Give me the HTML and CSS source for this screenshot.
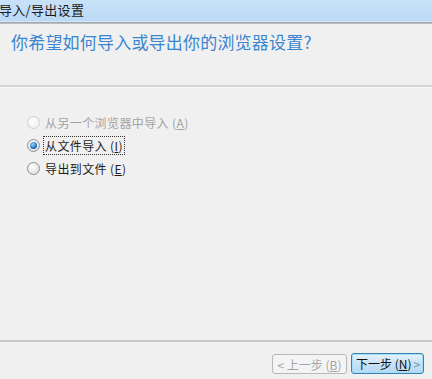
FILE: index.html
```html
<!DOCTYPE html>
<html lang="zh-CN">
<head>
<meta charset="utf-8">
<title>导入/导出设置</title>
<link rel="stylesheet" href="styles.css">
</head>
<body>
<div class="window">
  <div class="titlebar"><span class="title">导入/导出设置</span></div>
  <div class="header">
    <div class="question">你希望如何导入或导出你的浏览器设置?</div>
  </div>
  <div class="options">
    <div class="option disabled">
      <span class="radio"></span>
      <span class="label">从另一个浏览器中导入 (<u>A</u>)</span>
    </div>
    <div class="option">
      <span class="radio checked"></span>
      <span class="label focus">从文件导入 (<u>I</u>)</span>
    </div>
    <div class="option">
      <span class="radio"></span>
      <span class="label">导出到文件 (<u>E</u>)</span>
    </div>
  </div>
  <div class="spacer"></div>
  <div class="footer">
    <div class="btn btn-disabled">&lt; 上一步 (<u>B</u>)</div>
    <div class="btn btn-default"><span class="btn-text">下一步 (<u>N</u>)</span><span class="arrow">&gt;</span></div>
  </div>
</div>
</body>
</html>
```
FILE: styles.css
```css
html, body {
  margin: 0;
  padding: 0;
}
body {
  background: #f0f0f0;
  font-family: "Noto Sans CJK SC", "Noto Sans", sans-serif;
  color: #1e1e1e;
}
.window {
  width: 432px;
  height: 379px;
  display: flex;
  flex-direction: column;
  overflow: hidden;
}
.titlebar {
  height: 21px;
  background: linear-gradient(#c8e1f9, #bcd9f5);
  border-bottom: 1px solid #d4e7f8;
  box-shadow: 0 1px 0 #9ea9b3, 0 2px 0 #bdbdbd;
  margin-bottom: 2px;
  display: flex;
  align-items: center;
}
.title {
  font-size: 13px;
  line-height: 15px;
  color: #1a1a1a;
  margin-left: -1px;
  margin-top: -3px;
  letter-spacing: 0.3px;
}
.header {
  padding-left: 11px;
  border-bottom: 2px solid #d4d4d4;
  box-shadow: 0 1px 0 #fbfbfb;
  box-sizing: border-box;
  height: 63px;
}
.question {
  margin-top: 7px;
  font-size: 17px;
  line-height: 22px;
  color: #3a86d0;
  letter-spacing: 0.2px;
}
.options {
  padding-top: 24px;
  padding-left: 27px;
  display: flex;
  flex-direction: column;
}
.option {
  height: 23px;
  display: flex;
  align-items: center;
  font-size: 12px;
  white-space: nowrap;
}
.option.disabled {
  color: #a3a3a3;
}
.radio {
  width: 11px;
  height: 11px;
  border-radius: 50%;
  border: 1px solid #8e8f8f;
  background: radial-gradient(circle at 40% 35%, #ffffff, #e2e2e2 70%, #d0d0d0);
  margin-right: 3px;
  position: relative;
  flex: none;
}
.disabled .radio {
  border-color: #cfcfcf;
  background: radial-gradient(circle at 40% 35%, #fcfcfc, #eeeeee);
}
.radio.checked::after {
  content: "";
  position: absolute;
  left: 2px;
  top: 2px;
  width: 7px;
  height: 7px;
  border-radius: 50%;
  background: radial-gradient(circle at 40% 35%, #9fd4ff, #1f6fbf 60%, #124e92);
}
.label {
  line-height: 15px;
  padding: 1px 1px;
  border: 1px dotted transparent;
  letter-spacing: 0.4px;
}
.label.focus {
  border-color: #333;
}
.spacer {
  flex: 1;
}
.footer {
  border-top: 2px solid #c9c9c9;
  height: 39px;
  display: flex;
  justify-content: flex-end;
  align-items: flex-start;
  padding-top: 11px;
  padding-right: 8px;
  gap: 4px;
  box-sizing: border-box;
  flex: none;
}
.btn {
  height: 21px;
  box-sizing: border-box;
  border-radius: 3px;
  font-size: 12px;
  display: flex;
  align-items: center;
  justify-content: center;
  white-space: nowrap;
  flex: none;
}
.btn-disabled {
  width: 75px;
  border: 1px solid #b5b9bc;
  background: #f4f4f4;
  color: #a6a6a6;
  margin-top: 1px;
  height: 20px;
}
.btn-default {
  width: 73px;
  border: 1px solid #3c7fb1;
  box-shadow: 0 0 0 1px #9fe1fb inset;
  background: linear-gradient(#e6f3fc, #c7e3f7 50%, #b6d8f2);
  color: #111;
  justify-content: flex-start;
  padding: 0 0 0 4px;
  gap: 2px;
}
.btn-text {
  flex: none;
}
.arrow {
  flex: none;
  color: #7f8f9c;
  font-size: 12px;
}
```
